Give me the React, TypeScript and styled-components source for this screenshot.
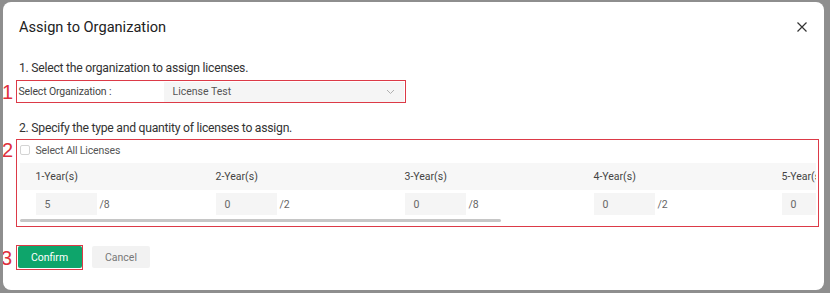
import React from 'react'
import styled, { createGlobalStyle } from 'styled-components'

const GlobalStyle = createGlobalStyle`
  html, body {
    margin: 0;
    padding: 0;
    background: #8e8e8e;
  }
  * {
    box-sizing: border-box;
  }
`

const Page = styled.div`
  width: 830px;
  height: 293px;
  padding: 2px 6px 3px 3px;
  font-family: Roboto, "Noto Sans", sans-serif;
`

const Modal = styled.div`
  width: 821px;
  height: 288px;
  background: #ffffff;
  border-radius: 8px;
  padding: 15px 16px 0 16px;
  overflow: hidden;
`

const Header = styled.div`
  display: flex;
  align-items: center;
  justify-content: space-between;
  height: 20px;
`

const Title = styled.h2`
  margin: 0;
  font-size: 14.6px;
  line-height: 20px;
  font-weight: 400;
  color: #222;
`

const CloseButton = styled.button`
  border: none;
  background: none;
  padding: 0;
  width: 12px;
  height: 12px;
  display: flex;
  color: #333;
`

const StepLabel = styled.div<{ $top: number }>`
  margin-top: ${p => p.$top}px;
  font-size: 12.2px;
  letter-spacing: -0.25px;
  line-height: 16px;
  color: #333;
`

const Marked = styled.div<{ $top: number; $width: number }>`
  position: relative;
  margin-top: ${p => p.$top}px;
  margin-left: -3px;
  width: ${p => p.$width}px;
  border: 1.5px solid #dc3a47;
`

const Marker = styled.span<{ $top: number }>`
  position: absolute;
  left: -15px;
  top: ${p => p.$top}px;
  font-family: "Liberation Sans", sans-serif;
  font-size: 20px;
  line-height: 20px;
  color: #e0303c;
`

const OrgRow = styled.div`
  display: flex;
  align-items: center;
  height: 21px;
  padding-left: 1.5px;
`

const OrgLabel = styled.span`
  width: 145px;
  font-size: 10.5px;
  letter-spacing: -0.15px;
  color: #444;
`

const Select = styled.div`
  flex: 1;
  height: 20px;
  margin-right: 1px;
  background: #f5f5f5;
  display: flex;
  align-items: center;
  justify-content: space-between;
  padding: 0 9px;
  font-size: 10.5px;
  color: #555;
`

const CheckRow = styled.label`
  display: flex;
  align-items: center;
  gap: 6px;
  height: 20px;
  padding-left: 2.5px;
  font-size: 10.5px;
  letter-spacing: -0.15px;
  color: #555;
`

const Checkbox = styled.span`
  width: 10px;
  height: 10px;
  border: 1px solid #d4d4d4;
  border-radius: 2px;
  background: #fff;
`

const Table = styled.div`
  margin: 2.5px 2.5px 0 2.5px;
  padding-bottom: 4.5px;
`

const Viewport = styled.div`
  overflow: hidden;
`

const Grid = styled.div<{ $cols: string }>`
  display: grid;
  grid-template-columns: ${p => p.$cols};
  width: max-content;
`

const HeadCell = styled.div`
  height: 27px;
  background: #f7f7f7;
  display: flex;
  align-items: center;
  padding-left: 16px;
  font-size: 10.5px;
  color: #444;
`

const BodyCell = styled.div`
  height: 29px;
  display: flex;
  align-items: center;
  padding-left: 16px;
  font-size: 10.5px;
  color: #666;
`

const QtyInput = styled.div`
  width: 61px;
  height: 22px;
  background: #f5f5f5;
  display: flex;
  align-items: center;
  padding-left: 9px;
  margin-right: 3px;
`

const ScrollTrack = styled.div`
  height: 3px;
`

const ScrollThumb = styled.div`
  height: 3px;
  border-radius: 2px;
  background: #c6c6c6;
`

const Footer = styled.div`
  position: relative;
  margin-top: 17.5px;
  margin-left: -3px;
  display: flex;
  align-items: center;
  gap: 9px;
`

const ConfirmWrap = styled.div`
  border: 1.5px solid #dc3a47;
  padding: 0.5px;
  display: flex;
`

const Button = styled.button<{ $primary?: boolean }>`
  height: 22px;
  border: none;
  border-radius: 2px;
  padding: 0;
  width: ${p => (p.$primary ? 64 : 58)}px;
  background: ${p => (p.$primary ? '#0ea56b' : '#f2f2f2')};
  color: ${p => (p.$primary ? '#ffffff' : '#777')};
  font-family: Roboto, "Noto Sans", sans-serif;
  font-size: 10.5px;
`

const licenses = [
  { label: '1-Year(s)', value: 5, total: 8, width: 180 },
  { label: '2-Year(s)', value: 0, total: 2, width: 189 },
  { label: '3-Year(s)', value: 0, total: 8, width: 189 },
  { label: '4-Year(s)', value: 0, total: 2, width: 188 },
  { label: '5-Year(s)', value: 0, total: 4, width: 189 },
  { label: '6-Year(s)', value: 0, total: 1, width: 189 },
  { label: '7-Year(s)', value: 0, total: 3, width: 189 },
]

const viewportWidth = 795
const contentWidth = licenses.reduce((s, l) => s + l.width, 0)
const thumbWidth = Math.round((viewportWidth * viewportWidth) / contentWidth)

export default function App() {
  const cols = licenses.map(l => `${l.width}px`).join(' ')
  return (
    <Page>
      <GlobalStyle />
      <Modal>
        <Header>
          <Title>Assign to Organization</Title>
          <CloseButton aria-label="Close">
            <svg width="12" height="12" viewBox="0 0 12 12">
              <path d="M1.5 1.5 L10.5 10.5 M10.5 1.5 L1.5 10.5" stroke="currentColor" strokeWidth="1.2" />
            </svg>
          </CloseButton>
        </Header>

        <StepLabel $top={23}>1. Select the organization to assign licenses.</StepLabel>
        <Marked $top={4} $width={390}>
          <Marker $top={1}>1</Marker>
          <OrgRow>
            <OrgLabel>Select Organization :</OrgLabel>
            <Select>
              <span>License Test</span>
              <svg width="9" height="6" viewBox="0 0 9 6">
                <path d="M1 1 L4.5 4.5 L8 1" fill="none" stroke="#b0b0b0" strokeWidth="1" />
              </svg>
            </Select>
          </OrgRow>
        </Marked>

        <StepLabel $top={17}>2. Specify the type and quantity of licenses to assign.</StepLabel>
        <Marked $top={3} $width={803}>
          <Marker $top={0}>2</Marker>
          <CheckRow>
            <Checkbox />
            Select All Licenses
          </CheckRow>
          <Table>
            <Viewport>
              <Grid $cols={cols}>
                {licenses.map(l => (
                  <HeadCell key={l.label}>{l.label}</HeadCell>
                ))}
                {licenses.map(l => (
                  <BodyCell key={l.label}>
                    <QtyInput>{l.value}</QtyInput>/{l.total}
                  </BodyCell>
                ))}
              </Grid>
            </Viewport>
            <ScrollTrack>
              <ScrollThumb style={{ width: thumbWidth }} />
            </ScrollTrack>
          </Table>
        </Marked>

        <Footer>
          <Marker $top={3}>3</Marker>
          <ConfirmWrap>
            <Button $primary>Confirm</Button>
          </ConfirmWrap>
          <Button>Cancel</Button>
        </Footer>
      </Modal>
    </Page>
  )
}
